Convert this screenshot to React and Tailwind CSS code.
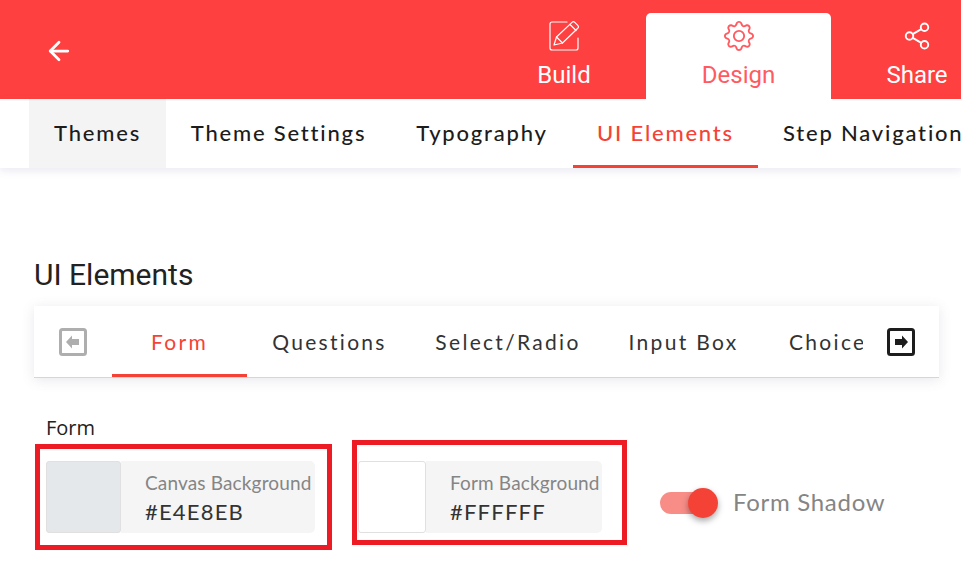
import React from "react";
import { ArrowLeft, Share2 } from "lucide-react";
import { BsGear } from "react-icons/bs";

const settingTabs = [
  { label: "Themes", cls: "w-[137px] justify-center pb-[2px] bg-[#f4f4f4] text-[#1c1c1c]" },
  { label: "Theme Settings", cls: "w-[225px] justify-center pb-[2px] text-[#1c1c1c]" },
  { label: "Typography", cls: "w-[182px] justify-center pb-[2px] text-[#1c1c1c]" },
  { label: "UI Elements", cls: "w-[185px] justify-center pt-[1px] text-[#f44336] border-b-[3px] border-[#f44336]" },
  { label: "Step Navigation", cls: "w-[225px] pl-[25px] pb-[2px] text-[#1c1c1c]" },
];

const elementTabs = [
  { label: "Form", cls: "w-[135px] justify-center pt-[3px] text-[#f44336] border-b-[3px] border-[#f44336]" },
  { label: "Questions", cls: "w-[165px] justify-center text-[#333]" },
  { label: "Select/Radio", cls: "w-[192px] justify-center text-[#333]" },
  { label: "Input Box", cls: "w-[159px] justify-center text-[#333]" },
  { label: "Choice Box", cls: "w-[160px] pl-[26px] text-[#333]" },
];

function BoxArrow({ dir, color }) {
  return (
    <svg width="28" height="28" viewBox="0 0 28 28" className="shrink-0">
      <rect x="1.5" y="1.5" width="25" height="25" rx="2" fill="#fff" stroke={color} strokeWidth="3" />
      <path
        d={dir === "left" ? "M7 14l6-6.5V11h7v6h-7v3.5z" : "M21 14l-6-6.5V11H8v6h7v3.5z"}
        fill={color}
      />
    </svg>
  );
}

function PenIcon() {
  return (
    <svg width="32" height="32" viewBox="0 0 32 32" fill="none" stroke="currentColor" strokeWidth="1.2" strokeLinejoin="round" strokeLinecap="round">
      <path d="M19 2H4a2 2 0 0 0-2 2v24a2 2 0 0 0 2 2h24a2 2 0 0 0 2-2V18" />
      <path d="M6 25l2.5-8L24 2.4a2 2 0 0 1 2.8 0l3 3a2 2 0 0 1 0 2.8L14.5 23z" />
      <path d="M8.5 17l6 6M22 4.5l6 6" />
    </svg>
  );
}

function ColorField({ label, value, swatch, swatchW, panelW }) {
  return (
    <div className="flex h-[72px]">
      <div className={`${swatchW} rounded-[3px] border border-[#e0e0e0]`} style={{ background: swatch }} />
      <div className={`${panelW} rounded-r-[5px] bg-[#f5f5f5] pl-[24px] pt-[10px]`}>
        <div className="text-[19px] leading-[24px] tracking-[0.15px] text-[#858585] whitespace-nowrap">{label}</div>
        <div className="mt-[2px] text-[22px] leading-[30px] tracking-[1.2px] text-[#333]">{value}</div>
      </div>
    </div>
  );
}

export default function App() {
  return (
    <div className="relative h-[583px] w-[961px] overflow-hidden bg-white font-['Lato',sans-serif]">
      {/* Top bar */}
      <div className="flex h-[99px] items-end bg-[#ff4040] font-['Roboto',sans-serif] text-[24px] text-white">
        <div className="flex h-full w-[482px] shrink-0 items-center pl-[44px] pt-[2px]">
          <ArrowLeft size={30} strokeWidth={2.2} />
        </div>
        <div className="flex h-full w-[164px] shrink-0 flex-col items-center pt-[20px]">
          <PenIcon />
          <span className="mt-[6px] leading-[34px]">Build</span>
        </div>
        <div className="flex h-[86px] w-[185px] shrink-0 flex-col items-center rounded-t-[5px] bg-white pt-[8px] text-[#ff5a5f]">
          <BsGear size={30} />
          <span className="mt-[7px] leading-[34px]">Design</span>
        </div>
        <div className="flex h-full w-[172px] shrink-0 flex-col items-center pt-[21px]">
          <Share2 size={30} strokeWidth={1.5} />
          <span className="mt-[7px] leading-[34px]">Share</span>
        </div>
      </div>

      {/* Settings tabs */}
      <div className="flex h-[69px] bg-white pl-[29px] shadow-[0_3px_8px_rgba(90,90,160,0.13)]">
        {settingTabs.map((tab) => (
          <div
            key={tab.label}
            className={`flex shrink-0 items-center whitespace-nowrap text-[22px] font-medium tracking-[1.8px] ${tab.cls}`}
          >
            {tab.label}
          </div>
        ))}
      </div>

      <div className="px-[34px] pt-[90px]">
        <h2 className="font-['Roboto',sans-serif] text-[30px] leading-[34px] text-[#222]">UI Elements</h2>

        {/* Element tabs */}
        <div className="mt-[14px] flex h-[72px] w-[905px] items-center border-b border-[#d5d5dd] bg-white pl-[25px] pr-[25px] shadow-[0_2px_12px_rgba(90,90,130,0.14)]">
          <BoxArrow dir="left" color="#aeaeae" />
          <div className="ml-[25px] flex h-full w-[751px] shrink-0 overflow-hidden">
            {elementTabs.map((tab) => (
              <div
                key={tab.label}
                className={`flex shrink-0 items-center whitespace-nowrap text-[21px] tracking-[2.3px] ${tab.cls}`}
              >
                {tab.label}
              </div>
            ))}
          </div>
          <div className="ml-[24px]">
            <BoxArrow dir="right" color="#1d1d1d" />
          </div>
        </div>

        <div className="mt-[36px] pl-[12px] font-['Open_Sans',sans-serif] text-[20px] leading-[28px] text-[#222]">Form</div>

        <div className="mt-[19px] flex items-center pl-[12px]">
          <ColorField label="Canvas Background" value="#E4E8EB" swatch="#e4e8eb" swatchW="w-[75px]" panelW="w-[194px]" />
          <div className="ml-[43px]">
            <ColorField label="Form Background" value="#FFFFFF" swatch="#fff" swatchW="w-[68px]" panelW="w-[176px]" />
          </div>
          <div className="ml-[58px] mt-[12px] flex items-center">
            <div className="relative h-[22px] w-[58px]">
              <div className="h-[22px] w-[44px] rounded-full bg-[#f88d87]" />
              <div className="absolute left-[28px] top-[-4px] h-[30px] w-[30px] rounded-full bg-[#f44336] shadow-[0_3px_6px_rgba(0,0,0,0.35)]" />
            </div>
            <div className="ml-[15px] pb-[2px] text-[24px] tracking-[0.7px] text-[#858585]">Form Shadow</div>
          </div>
        </div>
      </div>

      {/* Red annotation frames */}
      <div className="absolute left-[35px] top-[444px] h-[106px] w-[297px] border-[5px] border-[#ed1c24]" />
      <div className="absolute left-[352px] top-[440px] h-[105px] w-[275px] border-[5px] border-[#ed1c24]" />
    </div>
  );
}
